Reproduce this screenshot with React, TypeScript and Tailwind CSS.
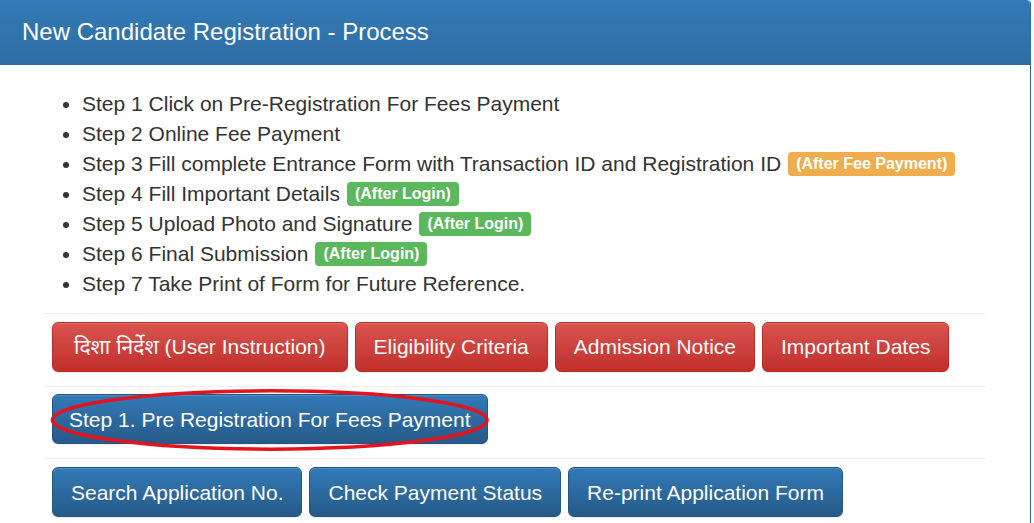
import React from 'react';

const steps: { text: string; badge?: { label: string; tone: 'orange' | 'green' } }[] = [
  { text: 'Step 1 Click on Pre-Registration For Fees Payment' },
  { text: 'Step 2 Online Fee Payment' },
  {
    text: 'Step 3 Fill complete Entrance Form with Transaction ID and Registration ID',
    badge: { label: '(After Fee Payment)', tone: 'orange' },
  },
  { text: 'Step 4 Fill Important Details', badge: { label: '(After Login)', tone: 'green' } },
  { text: 'Step 5 Upload Photo and Signature', badge: { label: '(After Login)', tone: 'green' } },
  { text: 'Step 6 Final Submission', badge: { label: '(After Login)', tone: 'green' } },
  { text: 'Step 7 Take Print of Form for Future Reference.' },
];

const btnBase =
  'h-[50px] rounded-[6px] border text-white text-[21px] leading-none shadow-[inset_0_1px_0_rgba(255,255,255,0.15),0_1px_1px_rgba(0,0,0,0.075)]';
const redBtn = `${btnBase} px-[18px] border-[#b92c28] bg-gradient-to-b from-[#d9534f] to-[#c12e2a]`;
const blueBtn = `${btnBase} border-[#245580] bg-gradient-to-b from-[#337ab7] to-[#265a88]`;

export default function App() {
  return (
    <div className="w-[1034px] h-[523px] overflow-hidden bg-white font-['Liberation_Sans',Arial,sans-serif]">
      <div className="w-[1031px] h-[523px] border-r border-[#2e6da4] rounded-tr-[4px]">
        <div className="h-[65px] flex items-center pl-[22px] rounded-tr-[4px] bg-gradient-to-b from-[#337ab7] to-[#2e6da4] text-white text-[24px] border-b border-[#2e6da4]">
          New Candidate Registration - Process
        </div>

        <div className="pl-[44px] pr-[45px] pt-[24px]">
          <ul className="list-disc pl-[38px] text-[#333] text-[21px] leading-[30px]">
            {steps.map((s) => (
              <li key={s.text}>
                {s.text}
                {s.badge && (
                  <span
                    className={`ml-[7px] inline-block align-[2px] rounded-[4px] px-[8px] text-white font-bold text-[16px] leading-[24px] ${
                      s.badge.tone === 'orange' ? 'bg-[#f0ad4e]' : 'bg-[#5cb85c]'
                    }`}
                  >
                    {s.badge.label}
                  </span>
                )}
              </li>
            ))}
          </ul>

          <div className="mt-[14px] border-t border-[#eee] pt-[8px] pb-[14px] pl-[8px] flex gap-[7px]">
            <button className={`${redBtn} px-[21px] pb-[2px] font-['Liberation_Sans','Noto_Sans',sans-serif]`}>
              दिशा निर्देश (User Instruction)
            </button>
            <button className={`${redBtn} pb-[2px]`}>Eligibility Criteria</button>
            <button className={`${redBtn} pb-[2px]`}>Admission Notice</button>
            <button className={`${redBtn} pb-[2px]`}>Important Dates</button>
          </div>

          <div className="border-t border-[#eee] pt-[7px] pb-[14px] pl-[8px] flex">
            <div className="relative">
              <button className={`${blueBtn} h-[48px] px-[16px]`}>Step 1. Pre Registration For Fees Payment</button>
              <svg
                className="absolute left-[-4px] top-[-5px] w-[calc(100%+8px)] h-[calc(100%+12px)] pointer-events-none overflow-visible"
                viewBox="0 0 100 100"
                preserveAspectRatio="none"
              >
                <ellipse
                  cx="50"
                  cy="50"
                  rx="49"
                  ry="47"
                  fill="none"
                  stroke="#e3141e"
                  strokeWidth="3.5"
                  vectorEffect="non-scaling-stroke"
                />
              </svg>
            </div>
          </div>

          <div className="border-t border-[#eee] pt-[8px] pl-[8px] flex gap-[7px]">
            <button className={`${blueBtn} px-[18px]`}>Search Application No.</button>
            <button className={`${blueBtn} px-[18px]`}>Check Payment Status</button>
            <button className={`${blueBtn} px-[18px]`}>Re-print Application Form</button>
          </div>
        </div>
      </div>
    </div>
  );
}
